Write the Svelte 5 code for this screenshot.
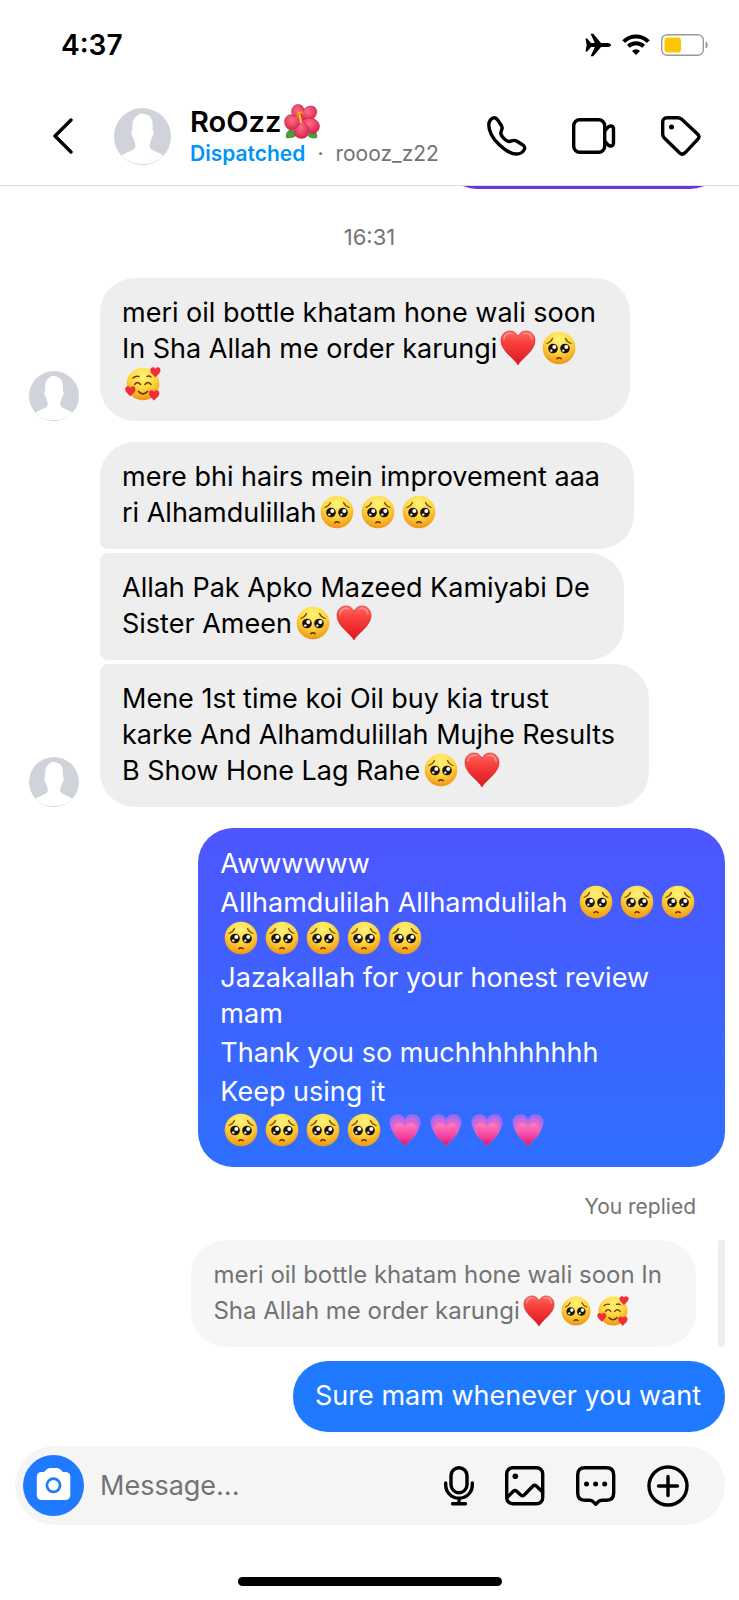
<script>
    let draft = $state("");

    const emojiIds = {
        "❤️": "heart",
        "🥺": "pleading",
        "🥰": "loving",
        "💗": "growing",
        "🌺": "hibiscus"
    };

    const firstGroup = [
        [["meri oil bottle khatam hone wali soon", "In Sha Allah me order karungi❤️🥺", "🥰"]]
    ];

    const secondGroup = [
        [["mere bhi hairs mein improvement aaa", "ri Alhamdulillah🥺🥺🥺"]],
        [["Allah Pak Apko Mazeed Kamiyabi De", "Sister Ameen🥺❤️"]],
        [["Mene 1st time koi Oil buy kia trust", "karke And Alhamdulillah Mujhe Results", "B Show Hone Lag Rahe🥺❤️"]]
    ];

    const reply = [
        ["Awwwwww"],
        ["Allhamdulilah Allhamdulilah 🥺🥺🥺", "🥺🥺🥺🥺🥺"],
        ["Jazakallah for your honest review", "mam"],
        ["Thank you so muchhhhhhhhh"],
        ["Keep using it"],
        ["🥺🥺🥺🥺💗💗💗💗"]
    ];

    const quoted = [["meri oil bottle khatam hone wali soon In", "Sha Allah me order karungi❤️🥺🥰"]];

    // cuts a line into plain text and single emoji
    function split(line) {
        return line.split(/(❤️|🥺|🥰|💗|🌺)/u).filter((part) => part !== "");
    }
</script>

<svg class="sprites" aria-hidden="true">
    <defs>
        <radialGradient id="faceFill" cx="50%" cy="25%" r="78%">
            <stop offset="0" stop-color="#fff27a" />
            <stop offset="0.5" stop-color="#ffd83c" />
            <stop offset="1" stop-color="#ee8e12" />
        </radialGradient>
        <linearGradient id="heartFill" x1="0" y1="0" x2="0" y2="1">
            <stop offset="0" stop-color="#ff6b62" />
            <stop offset="0.35" stop-color="#f8403c" />
            <stop offset="1" stop-color="#dd1620" />
        </linearGradient>
        <linearGradient id="pinkFill" x1="0" y1="0" x2="0" y2="1">
            <stop offset="0" stop-color="#ff7fc0" />
            <stop offset="0.6" stop-color="#f2409f" />
            <stop offset="1" stop-color="#c81a63" />
        </linearGradient>
        <radialGradient id="petalFill" cx="45%" cy="35%" r="70%">
            <stop offset="0" stop-color="#ff6f87" />
            <stop offset="1" stop-color="#d81d4b" />
        </radialGradient>
        <path id="heartShape" d="M18 35C14 28 1 21 1 10.500C1 5 5 1 10 1C13.500 1 16.700 3 18 6.500C19.300 3 22.500 1 26 1C31 1 35 5 35 10.500C35 21 22 28 18 35Z" />
    </defs>
    <symbol id="heart" viewBox="0 0 36 36">
        <use href="#heartShape" fill="url(#heartFill)" stroke="#c9202a" stroke-width="0.6" />
        <path d="M4 9C4 5 8 2.500 12 3.500M24 3.500C28 2.500 32 5 32 9" fill="none" stroke="#ffa9a0" stroke-width="1.500" stroke-linecap="round" opacity="0.7" />
    </symbol>
    <symbol id="pleading" viewBox="0 0 36 36">
        <circle cx="18" cy="18" r="16.300" fill="url(#faceFill)" />
        <circle cx="12" cy="18.500" r="4.800" fill="#1d1208" />
        <circle cx="24" cy="18.500" r="4.800" fill="#1d1208" />
        <circle cx="13.300" cy="17" r="2" fill="#fff" />
        <circle cx="25.300" cy="17" r="2" fill="#fff" />
        <circle cx="10.300" cy="20.600" r="1.200" fill="#fff" />
        <circle cx="22.300" cy="20.600" r="1.200" fill="#fff" />
        <path d="M6 13.500C8.500 12.500 10.500 11 11.500 8.500M30 13.500C27.500 12.500 25.500 11 24.500 8.500" fill="none" stroke="#7a4a0c" stroke-width="1.300" stroke-linecap="round" />
        <path d="M15.900 28.700Q18 27 20.100 28.700" fill="none" stroke="#6b2b0c" stroke-width="1.500" stroke-linecap="round" />
    </symbol>
    <symbol id="loving" viewBox="0 0 36 36">
        <circle cx="18" cy="18" r="16.300" fill="url(#faceFill)" />
        <path d="M9.500 18.500Q12.500 14.500 15.500 18.500M20 18.500Q23 14.500 26 18.500M8 12Q10.500 9.500 14 10.500M22 10.500Q24 9.500 26 11" fill="none" stroke="#6b3a0c" stroke-width="1.500" stroke-linecap="round" />
        <path d="M13.500 25.500Q18 30 22.500 25.500" fill="none" stroke="#6b2b0c" stroke-width="1.700" stroke-linecap="round" />
        <use href="#heartShape" fill="#ef2f38" transform="translate(25 1) scale(.3)" />
        <use href="#heartShape" fill="#ef2f38" transform="translate(0 20) scale(.3)" />
        <use href="#heartShape" fill="#ef2f38" transform="translate(23.500 24) scale(.31)" />
    </symbol>
    <symbol id="growing" viewBox="0 0 36 36">
        <use href="#heartShape" fill="#9b6cf2" transform="translate(1.500 1.500) scale(.92 .86)" />
        <use href="#heartShape" fill="#c46be4" transform="translate(3 5) scale(.83 .8)" />
        <use href="#heartShape" fill="#e765c8" transform="translate(4.400 8) scale(.76)" />
        <use href="#heartShape" fill="url(#pinkFill)" transform="translate(5.700 10.500) scale(.68)" />
    </symbol>
    <symbol id="hibiscus" viewBox="0 0 36 36">
        <path d="M2 34C1 29 4 25 9 25L14 30C11 34 6 35 2 34Z" fill="#4d9a36" />
        <path d="M33 34C34 29 31 26 27 26L23 31C25 34 29 35 33 34Z" fill="#4d9a36" />
        <g fill="url(#petalFill)" stroke="#b5173c" stroke-width="0.5">
            <path d="M17 17C8 14 5 7 10 2C13 0 17 0 19 3C21 6 21 12 17 17Z" />
            <path d="M17 17C16 8 21 2 27 2C32 2 34 7 32 11C30 16 24 18 17 17Z" />
            <path d="M17 17C25 11 35 15 35.500 22C35 29 29 31 25 28C21 26 18 22 17 17Z" />
            <path d="M17 17C25 20 27 28 22 33C18 36 12 34 10.500 30C9 25 13 19 17 17Z" />
            <path d="M17 17C14 25 7 28 3 24C-1 19 0 13 5 11C10 10 15 13 17 17Z" />
        </g>
        <path d="M17 18L15 9" stroke="#f8c13a" stroke-width="2.500" stroke-linecap="round" />
        <path d="M12.500 10L19 9M13 13L18 7" stroke="#f08a1e" stroke-width="1.500" stroke-linecap="round" />
    </symbol>
    <symbol id="person" viewBox="0 0 57 57">
        <circle cx="28.500" cy="28.500" r="28.500" fill="#d0d4da" />
        <path d="M28.500 56C20 56 12.500 53 7.500 47.500C13 43.500 20.500 43 21.500 38.500C21.800 35.500 20 34 19.500 30C17 28 17 23 18.500 22C17.500 12 21 9 24 7C26 5.500 30 5.300 33 7C37 8 39.500 12 38.500 22C40 23 40 28 37.500 30C37 34 35.200 35.500 35.500 38.500C36.500 43 44 43.500 49.500 47.500C44.500 53 37 56 28.500 56Z" fill="#fff" />
    </symbol>
</svg>

{#snippet rich(line)}
    {#each split(line) as part}{#if emojiIds[part]}<svg class="emoji" role="img" aria-label={part}><use href={"#" + emojiIds[part]} /></svg>{:else}{part}{/if}{/each}
{/snippet}

{#snippet bubble(paragraphs, kind)}
    <div class="bubble {kind}">
        {#each paragraphs as lines}
            <p>
                {#each lines as line}
                    <span class="line">{@render rich(line)}</span>
                {/each}
            </p>
        {/each}
    </div>
{/snippet}

{#snippet incoming(messages)}
    <div class="incoming">
        <svg class="smallAvatar" aria-hidden="true"><use href="#person" /></svg>
        <div class="stack">
            {#each messages as message}
                {@render bubble(message, "theirs")}
            {/each}
        </div>
    </div>
{/snippet}

<div class="screen">
    <div class="statusBar">
        <div class="clock">4:37</div>
        <div class="statusIcons">
            <svg width="26" height="24" viewBox="0 0 26 24">
                <path d="M0.500 5.500H2.200L6 10H9.800L5.600 0.700H8.300L16 10H22.500C24.500 10 26 11 26 12C26 13 24.500 14 22.500 14H16L8.300 23.300H5.600L9.800 14H6L2.200 18.500H0.500L1.700 12Z" />
            </svg>
            <svg width="28" height="22" viewBox="0 0 28 22">
                <path d="M1.700 7.600A17.500 17.500 0 0 1 26.300 7.600M6.300 12.300A11 11 0 0 1 21.700 12.300" fill="none" stroke="#000" stroke-width="4" />
                <path d="M14 21L10 17A5.700 5.700 0 0 1 18 17Z" />
            </svg>
            <svg width="48" height="22" viewBox="0 0 48 22">
                <rect x="0.700" y="0.700" width="41.600" height="20.600" rx="5.500" fill="none" stroke="#999" stroke-width="1.400" />
                <rect x="3.500" y="3.500" width="16.500" height="15" rx="3" fill="#fdc700" />
                <path d="M44.500 7.500C47.500 8.500 47.500 13.500 44.500 14.500Z" fill="#999" />
            </svg>
        </div>
    </div>

    <header>
        <button class="back" aria-label="Back">
            <svg width="20" height="36" viewBox="0 0 20 36">
                <path d="M18 2L2 18L18 34" fill="none" stroke="#000" stroke-width="3.400" stroke-linecap="round" stroke-linejoin="round" />
            </svg>
        </button>
        <svg class="avatar" aria-hidden="true"><use href="#person" /></svg>
        <div class="who">
            <div class="name">{@render rich("RoOzz🌺")}</div>
            <div class="handle"><b>Dispatched</b><span>·</span><span>roooz_z22</span></div>
        </div>
        <div class="actions">
            <button aria-label="Call">
                <svg width="40" height="40" viewBox="0 0 40 40">
                    <path d="M7.300 1.800C9 1.800 10 3 10.800 4.200L14.500 9.800C16.500 13 13.500 14.500 13.800 17.500C14.500 20.500 18.500 25 21.500 25.500C24.500 26 25.500 23 29.500 25L35.500 28.700C38 30.300 38.500 31.500 37 34C35.500 36.500 33 38 29.500 38C20 38 1.800 22.500 1.800 9C1.800 5 4.500 1.800 7.300 1.800Z" />
                </svg>
            </button>
            <button aria-label="Video call">
                <svg width="44" height="36" viewBox="0 0 44 36">
                    <rect x="1.700" y="1.700" width="31" height="32.600" rx="6" />
                    <path d="M33 12.500L36 9.200C38.500 7.200 41.500 8 41.500 11V25C41.500 28 38.500 28.800 36 26.800L33 23.500" />
                </svg>
            </button>
            <button aria-label="Label">
                <svg width="40" height="40" viewBox="0 0 40 40">
                    <path d="M1.700 6C1.700 3.300 3.300 1.700 6 1.700H16C18 1.700 19.500 2.200 21 3.500L36.500 18C38.500 20 38.500 21.500 36.700 23.300L24 36.800C22 38.700 20.500 38.700 18.700 37L3.300 22C2 20.500 1.700 19.500 1.700 18Z" />
                    <circle class="dot" cx="10.500" cy="11" r="2.500" />
                </svg>
            </button>
        </div>
    </header>

    <main>
        <!-- bottom edge of the message scrolled under the header -->
        <div class="scrolled"><div class="scrolledBubble"></div></div>

        <div class="timestamp">16:31</div>
        {@render incoming(firstGroup)}
        {@render incoming(secondGroup)}
        {@render bubble(reply, "mine gradient")}

        <div class="replied">You replied</div>
        <div class="quoteRow">
            {@render bubble(quoted, "quote")}
            <div class="quoteBar"></div>
        </div>
        {@render bubble([["Sure mam whenever you want"]], "mine solid")}
    </main>

    <div class="composer">
        <button class="camera" aria-label="Camera">
            <svg width="61" height="61" viewBox="0 0 61 61">
                <path d="M19 17H21L23.500 14.500Q25 13 27 13H34Q36 13 37.500 14.500L40 17H42Q47.300 17 47.300 22V40Q47.300 45 42 45H19Q13.800 45 13.800 40V22Q13.800 17 19 17Z" fill="#fff" />
                <circle cx="30.500" cy="30.300" r="6.600" fill="none" stroke="#1f7aff" stroke-width="2.700" />
            </svg>
        </button>
        <input type="text" aria-label="Message" placeholder="Message..." bind:value={draft} />
        <div class="tools">
            <button aria-label="Voice message">
                <svg width="30" height="40" viewBox="0 0 30 40">
                    <rect x="7" y="1.700" width="16" height="25" rx="8" />
                    <path d="M1.700 17V19A13.300 13.300 0 0 0 28.300 19V17M15 33V37.500M8.500 37.800H21.500" />
                </svg>
            </button>
            <button aria-label="Gallery">
                <svg width="40" height="40" viewBox="0 0 40 40">
                    <rect x="1.700" y="1.700" width="36" height="36" rx="6" />
                    <path d="M2 31.500L8.300 25.300Q10 23.700 11.700 25.300L15.800 29Q17.500 30.500 19.200 29L28 20Q29.700 18.500 31.400 20L37.500 26" />
                    <circle class="dot" cx="10.300" cy="10.300" r="2.800" />
                </svg>
            </button>
            <button aria-label="Saved replies">
                <svg width="40" height="40" viewBox="0 0 40 40">
                    <path d="M9 1.700H30.500Q37.700 1.700 37.700 9V27Q37.700 34.200 30.500 34.200H26Q24 34.200 22.500 35.600L19.700 38.300L17 35.600Q15.500 34.200 13.500 34.200H9Q1.700 34.200 1.700 27V9Q1.700 1.700 9 1.700Z" />
                    <circle class="dot" cx="10.500" cy="18" r="2.500" />
                    <circle class="dot" cx="19.600" cy="18" r="2.500" />
                    <circle class="dot" cx="28.700" cy="18" r="2.500" />
                </svg>
            </button>
            <button aria-label="More">
                <svg width="42" height="42" viewBox="0 0 42 42">
                    <circle cx="21" cy="21" r="19" />
                    <path d="M21 11.500V30.500M11.500 21H30.500" />
                </svg>
            </button>
        </div>
    </div>

    <div class="homeIndicator"></div>
</div>

<style>
    :global(body) {
        background-color: #fff;
    }
    .sprites {
        position: absolute;
        width: 0;
        height: 0;
    }
    .screen {
        display: flex;
        flex-direction: column;
        min-height: 100vh;
        box-sizing: border-box;
        font-family: Inter, "Liberation Sans", sans-serif;
        font-size: 27px;
        line-height: 36px;
        color: #000;
    }
    button {
        display: flex;
        padding: 0;
        border: none;
        background: none;
        cursor: pointer;
    }
    .statusBar {
        display: flex;
        justify-content: space-between;
        align-items: center;
        height: 85px;
        padding: 2px 30px 0 61px;
    }
    .clock {
        font-size: 28px;
        font-weight: 600;
    }
    .statusIcons {
        display: flex;
        align-items: center;
        gap: 11px;
    }
    header {
        display: flex;
        align-items: center;
        height: 98px;
        padding: 0 38px 0 53px;
        border-bottom: 1px solid #dbdbdb;
    }
    .avatar {
        width: 57px;
        height: 57px;
        margin: 0 19px 0 41px;
        flex: none;
    }
    .who {
        flex: 1;
        min-width: 0;
    }
    .name {
        font-size: 29px;
        font-weight: 600;
        line-height: 36px;
    }
    .handle {
        display: flex;
        gap: 12px;
        font-size: 21px;
        line-height: 28px;
        color: #737373;
    }
    .handle b {
        font-weight: 600;
        color: #0095f6;
    }
    .actions {
        display: flex;
        align-items: center;
        gap: 45px;
    }
    .actions svg, .tools svg {
        fill: none;
        stroke: #000;
        stroke-width: 3.4;
        stroke-linecap: round;
        stroke-linejoin: round;
    }
    .actions .dot, .tools .dot {
        fill: #000;
        stroke: none;
    }
    main {
        display: flex;
        flex-direction: column;
        padding: 0 14px 14px 29px;
    }
    .scrolled {
        display: flex;
        justify-content: flex-end;
        align-items: flex-end;
        height: 3px;
        overflow: hidden;
    }
    .scrolledBubble {
        flex: none;
        width: 283px;
        height: 71px;
        border-radius: 35px;
        background-color: #6a35e0;
    }
    .timestamp {
        padding: 34px 15px 27px 0;
        font-size: 22px;
        line-height: 28px;
        text-align: center;
        color: #737373;
    }
    .incoming {
        display: flex;
        align-items: flex-end;
        gap: 21px;
        margin-bottom: 21px;
    }
    .smallAvatar {
        width: 50px;
        height: 50px;
        flex: none;
    }
    .stack {
        display: flex;
        flex-direction: column;
        align-items: flex-start;
        gap: 4px;
    }
    .bubble {
        display: flex;
        flex-direction: column;
        gap: 3px;
        padding: 17px 34px 18px 22px;
        border-radius: 35px;
    }
    .bubble p {
        margin: 0;
    }
    .line {
        display: block;
    }
    .theirs {
        background-color: #eee;
    }
    .theirs:not(:first-child) {
        border-top-left-radius: 8px;
    }
    .theirs:not(:last-child) {
        border-bottom-left-radius: 8px;
    }
    .mine {
        align-self: flex-end;
        padding-right: 24px;
        color: #fff;
    }
    .gradient {
        padding-top: 18px;
        padding-right: 27px;
        background: linear-gradient(#4d56ff, #2f6fff);
    }
    .solid {
        background-color: #1f7aff;
    }
    .emoji {
        width: 36px;
        height: 36px;
        margin: -4px 2px -4px 3px;
        vertical-align: -4px;
    }
    .replied {
        padding: 26px 29px 19px 0;
        font-size: 21px;
        line-height: 28px;
        text-align: right;
        color: #737373;
    }
    .quoteRow {
        display: flex;
        justify-content: flex-end;
        gap: 22px;
        margin-bottom: 14px;
    }
    .quote {
        background-color: #f6f6f6;
        font-size: 24px;
        color: #737373;
    }
    .quote .emoji {
        width: 32px;
        height: 32px;
    }
    .quoteBar {
        width: 7px;
        border-radius: 3px;
        background-color: #eee;
    }
    .composer {
        display: flex;
        align-items: center;
        height: 79px;
        margin: 0 14px 0 15px;
        padding: 0 36px 0 8px;
        box-sizing: border-box;
        border-radius: 40px;
        background-color: #f5f5f5;
    }
    .camera {
        flex: none;
        border-radius: 50%;
        background-color: #1f7aff;
    }
    input {
        flex: 1;
        min-width: 0;
        margin: 0 16px;
        padding: 0;
        border: none;
        outline: none;
        background: none;
        font-family: inherit;
        font-size: 27px;
        color: #000;
    }
    input::placeholder {
        color: #737373;
        opacity: 1;
    }
    .tools {
        display: flex;
        align-items: center;
        gap: 31px;
    }
    .homeIndicator {
        width: 264px;
        height: 9px;
        margin: auto auto 14px;
        border-radius: 5px;
        background-color: #000;
    }
</style>
